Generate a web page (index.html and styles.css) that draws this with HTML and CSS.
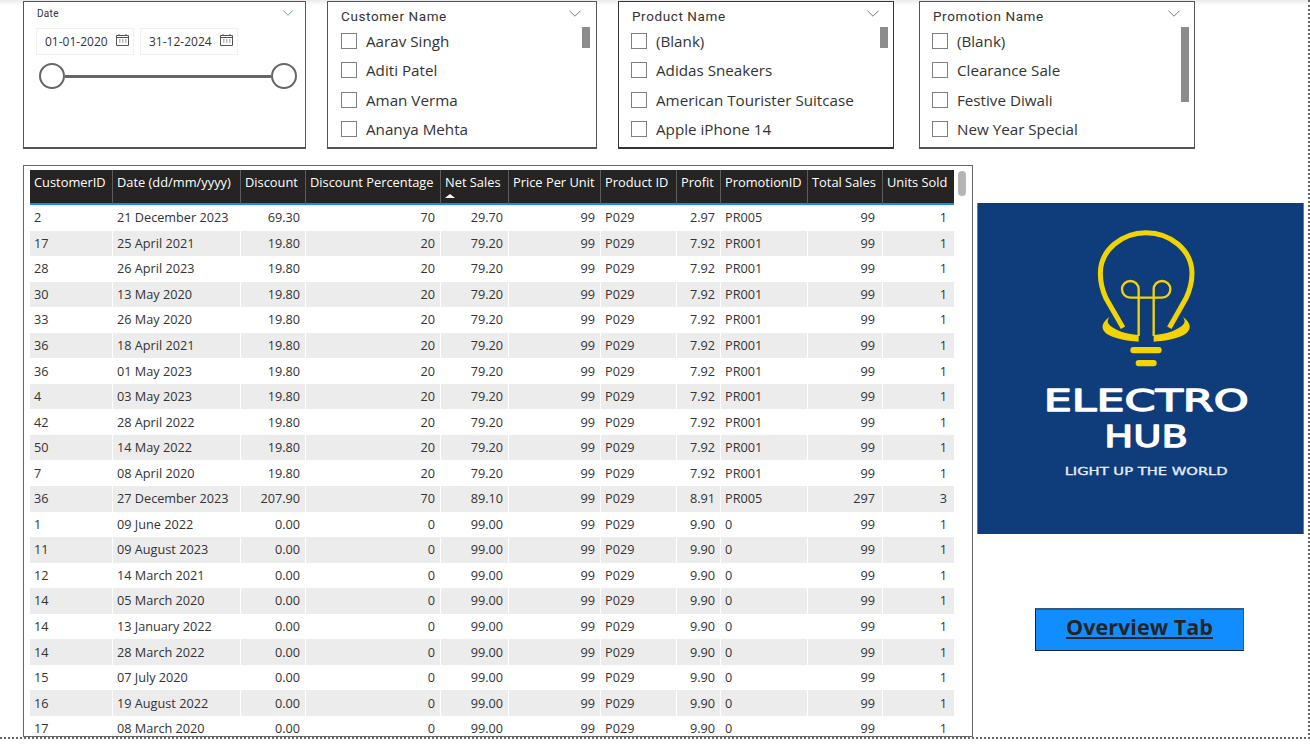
FILE: index.html
```html
<!DOCTYPE html>
<html lang="en">
<head>
  <meta charset="UTF-8" />
  <meta name="viewport" content="width=device-width, initial-scale=1.0" />
  <title>Electro Hub Sales Details</title>
  <link rel="stylesheet" href="styles.css">
</head>
<body>
  <div class="canvas">
    <div class="slicers">
      <section class="slicer date-slicer">
        <div class="slicer-head date-head">
          <span class="date-title">Date</span>
          <svg class="chevron green" viewBox="0 0 11 6"><path d="M.5.5l5 5 5-5" /></svg>
        </div>
        <div class="date-inputs">
          <div class="date-box">
            <span>01-01-2020</span>
            <svg class="cal" viewBox="0 0 13 12"><path class="cal-line" d="M.5 1.500h12v10H.5zM.5 3.500h12" /><path class="cal-top" d="M3 0v2M10 0v2" /><path class="cal-dots" d="M3 6h1.500M6 6h1.500M9 6h1.500M3 8h1.500M6 8h1.500M9 8h1.500" /></svg>
          </div>
          <div class="date-box">
            <span>31-12-2024</span>
            <svg class="cal" viewBox="0 0 13 12"><path class="cal-line" d="M.5 1.500h12v10H.5zM.5 3.500h12" /><path class="cal-top" d="M3 0v2M10 0v2" /><path class="cal-dots" d="M3 6h1.500M6 6h1.500M9 6h1.500M3 8h1.500M6 8h1.500M9 8h1.500" /></svg>
          </div>
        </div>
        <div class="range">
          <span class="handle"></span>
          <span class="track"></span>
          <span class="handle"></span>
        </div>
      </section>

      <section class="slicer customer-slicer">
        <div class="slicer-head">
          <span class="slicer-title">Customer Name</span>
          <svg class="chevron" viewBox="0 0 11 6"><path d="M.5.5l5 5 5-5" /></svg>
        </div>
        <div class="slicer-body">
          <ul class="slicer-list">
            <li><span class="check"></span>Aarav Singh</li>
            <li><span class="check"></span>Aditi Patel</li>
            <li><span class="check"></span>Aman Verma</li>
            <li><span class="check"></span>Ananya Mehta</li>
          </ul>
          <div class="thumb"></div>
        </div>
      </section>

      <section class="slicer product-slicer">
        <div class="slicer-head">
          <span class="slicer-title">Product Name</span>
          <svg class="chevron" viewBox="0 0 11 6"><path d="M.5.5l5 5 5-5" /></svg>
        </div>
        <div class="slicer-body">
          <ul class="slicer-list">
            <li><span class="check"></span>(Blank)</li>
            <li><span class="check"></span>Adidas Sneakers</li>
            <li><span class="check"></span>American Tourister Suitcase</li>
            <li><span class="check"></span>Apple iPhone 14</li>
          </ul>
          <div class="thumb"></div>
        </div>
      </section>

      <section class="slicer promo-slicer">
        <div class="slicer-head">
          <span class="slicer-title">Promotion Name</span>
          <svg class="chevron" viewBox="0 0 11 6"><path d="M.5.5l5 5 5-5" /></svg>
        </div>
        <div class="slicer-body">
          <ul class="slicer-list">
            <li><span class="check"></span>(Blank)</li>
            <li><span class="check"></span>Clearance Sale</li>
            <li><span class="check"></span>Festive Diwali</li>
            <li><span class="check"></span>New Year Special</li>
          </ul>
          <div class="thumb thumb-long"></div>
        </div>
      </section>
    </div>

    <div class="main">
      <section class="table-panel">
        <div class="table-wrap">
          <table class="sales">
            <colgroup>
              <col class="c82"><col class="c128"><col class="c65"><col class="c135"><col class="c68"><col class="c92"><col class="c76"><col class="c44"><col class="c87"><col class="c75"><col class="c72">
            </colgroup>
            <thead>
              <tr>
                <th>CustomerID</th><th>Date (dd/mm/yyyy)</th><th>Discount</th><th>Discount Percentage</th>
                <th>Net Sales<span class="sort-up"></span></th>
                <th>Price Per Unit</th><th>Product ID</th><th>Profit</th><th>PromotionID</th><th>Total Sales</th><th>Units Sold</th>
              </tr>
            </thead>
            <tbody>
              <tr><td>2</td><td>21 December 2023</td><td class="num">69.30</td><td class="num">70</td><td class="num">29.70</td><td class="num">99</td><td>P029</td><td class="num">2.97</td><td>PR005</td><td class="num">99</td><td class="num">1</td></tr>
              <tr><td>17</td><td>25 April 2021</td><td class="num">19.80</td><td class="num">20</td><td class="num">79.20</td><td class="num">99</td><td>P029</td><td class="num">7.92</td><td>PR001</td><td class="num">99</td><td class="num">1</td></tr>
              <tr><td>28</td><td>26 April 2023</td><td class="num">19.80</td><td class="num">20</td><td class="num">79.20</td><td class="num">99</td><td>P029</td><td class="num">7.92</td><td>PR001</td><td class="num">99</td><td class="num">1</td></tr>
              <tr><td>30</td><td>13 May 2020</td><td class="num">19.80</td><td class="num">20</td><td class="num">79.20</td><td class="num">99</td><td>P029</td><td class="num">7.92</td><td>PR001</td><td class="num">99</td><td class="num">1</td></tr>
              <tr><td>33</td><td>26 May 2020</td><td class="num">19.80</td><td class="num">20</td><td class="num">79.20</td><td class="num">99</td><td>P029</td><td class="num">7.92</td><td>PR001</td><td class="num">99</td><td class="num">1</td></tr>
              <tr><td>36</td><td>18 April 2021</td><td class="num">19.80</td><td class="num">20</td><td class="num">79.20</td><td class="num">99</td><td>P029</td><td class="num">7.92</td><td>PR001</td><td class="num">99</td><td class="num">1</td></tr>
              <tr><td>36</td><td>01 May 2023</td><td class="num">19.80</td><td class="num">20</td><td class="num">79.20</td><td class="num">99</td><td>P029</td><td class="num">7.92</td><td>PR001</td><td class="num">99</td><td class="num">1</td></tr>
              <tr><td>4</td><td>03 May 2023</td><td class="num">19.80</td><td class="num">20</td><td class="num">79.20</td><td class="num">99</td><td>P029</td><td class="num">7.92</td><td>PR001</td><td class="num">99</td><td class="num">1</td></tr>
              <tr><td>42</td><td>28 April 2022</td><td class="num">19.80</td><td class="num">20</td><td class="num">79.20</td><td class="num">99</td><td>P029</td><td class="num">7.92</td><td>PR001</td><td class="num">99</td><td class="num">1</td></tr>
              <tr><td>50</td><td>14 May 2022</td><td class="num">19.80</td><td class="num">20</td><td class="num">79.20</td><td class="num">99</td><td>P029</td><td class="num">7.92</td><td>PR001</td><td class="num">99</td><td class="num">1</td></tr>
              <tr><td>7</td><td>08 April 2020</td><td class="num">19.80</td><td class="num">20</td><td class="num">79.20</td><td class="num">99</td><td>P029</td><td class="num">7.92</td><td>PR001</td><td class="num">99</td><td class="num">1</td></tr>
              <tr><td>36</td><td>27 December 2023</td><td class="num">207.90</td><td class="num">70</td><td class="num">89.10</td><td class="num">99</td><td>P029</td><td class="num">8.91</td><td>PR005</td><td class="num">297</td><td class="num">3</td></tr>
              <tr><td>1</td><td>09 June 2022</td><td class="num">0.00</td><td class="num">0</td><td class="num">99.00</td><td class="num">99</td><td>P029</td><td class="num">9.90</td><td>0</td><td class="num">99</td><td class="num">1</td></tr>
              <tr><td>11</td><td>09 August 2023</td><td class="num">0.00</td><td class="num">0</td><td class="num">99.00</td><td class="num">99</td><td>P029</td><td class="num">9.90</td><td>0</td><td class="num">99</td><td class="num">1</td></tr>
              <tr><td>12</td><td>14 March 2021</td><td class="num">0.00</td><td class="num">0</td><td class="num">99.00</td><td class="num">99</td><td>P029</td><td class="num">9.90</td><td>0</td><td class="num">99</td><td class="num">1</td></tr>
              <tr><td>14</td><td>05 March 2020</td><td class="num">0.00</td><td class="num">0</td><td class="num">99.00</td><td class="num">99</td><td>P029</td><td class="num">9.90</td><td>0</td><td class="num">99</td><td class="num">1</td></tr>
              <tr><td>14</td><td>13 January 2022</td><td class="num">0.00</td><td class="num">0</td><td class="num">99.00</td><td class="num">99</td><td>P029</td><td class="num">9.90</td><td>0</td><td class="num">99</td><td class="num">1</td></tr>
              <tr><td>14</td><td>28 March 2022</td><td class="num">0.00</td><td class="num">0</td><td class="num">99.00</td><td class="num">99</td><td>P029</td><td class="num">9.90</td><td>0</td><td class="num">99</td><td class="num">1</td></tr>
              <tr><td>15</td><td>07 July 2020</td><td class="num">0.00</td><td class="num">0</td><td class="num">99.00</td><td class="num">99</td><td>P029</td><td class="num">9.90</td><td>0</td><td class="num">99</td><td class="num">1</td></tr>
              <tr><td>16</td><td>19 August 2022</td><td class="num">0.00</td><td class="num">0</td><td class="num">99.00</td><td class="num">99</td><td>P029</td><td class="num">9.90</td><td>0</td><td class="num">99</td><td class="num">1</td></tr>
              <tr><td>17</td><td>08 March 2020</td><td class="num">0.00</td><td class="num">0</td><td class="num">99.00</td><td class="num">99</td><td>P029</td><td class="num">9.90</td><td>0</td><td class="num">99</td><td class="num">1</td></tr>
            </tbody>
          </table>
        </div>
        <div class="table-thumb"></div>
      </section>

      <aside class="side">
        <svg class="logo" viewBox="6 9 979 993">
          <rect class="logo-bg" x="6" y="9" width="979" height="993" />
          <path class="bulb" d="M443 383L392 295C378 265 375 240 375 220C375 150 440 98 512 98C585 98 650 150 650 220C650 240 645 268 632 295L582 383" />
          <path class="collar" d="M403 350C375 370 375 390 400 405C425 418 460 423 490 425V405C450 402 415 390 400 372C395 365 397 357 403 350Z" />
          <path class="collar" d="M622 350C650 370 650 390 625 405C600 418 565 423 535 425V405C575 402 610 390 625 372C630 365 628 357 622 350Z" />
          <path class="filament" d="M490 408V268A25 25 0 1 0 465 293H560A25 25 0 1 0 535 268V408" />
          <rect class="collar" x="465" y="441" width="94" height="19" rx="9" />
          <rect class="collar" x="481" y="480" width="63" height="19" rx="9" />
          <text class="logo-name" x="205" y="632" textLength="615" lengthAdjust="spacingAndGlyphs">ELECTRO</text>
          <text class="logo-name" x="387" y="742" textLength="251" lengthAdjust="spacingAndGlyphs">HUB</text>
          <text class="logo-tag" x="268" y="824" textLength="489" lengthAdjust="spacingAndGlyphs">LIGHT UP THE WORLD</text>
        </svg>
        <a class="nav-btn" href="#">Overview Tab</a>
      </aside>
    </div>
  </div>
</body>
</html>
```

FILE: styles.css
```css
* {
  box-sizing: border-box;
}

html, body {
  margin: 0;
  height: 100%;
  background-color: white;
  overflow: hidden;
}

body {
  font-family: "Open Sans", "Noto Sans", sans-serif;
  color: #333;
}

.canvas {
  width: 1310px;
  height: 739px;
  padding: 1px 0 0 23px;
  border-right: 2px dotted #666;
  border-bottom: 2px dotted #666;
  box-shadow: inset 0 5px 4px -3px #e4e4e4;
}

/* slicers row */
.slicers {
  display: flex;
  height: 148px;
}

.slicer {
  display: flex;
  flex-direction: column;
  background-color: white;
  border: 1px solid #555;
  border-bottom-width: 2px;
}

.date-slicer { width: 283px; padding: 0 8px 0 13px; }
.customer-slicer { width: 270px; margin-left: 21px; padding: 0 6px 0 13px; }
.product-slicer { width: 276px; margin-left: 21px; padding: 0 5px 0 13px; border-color: #333; }
.promo-slicer { width: 276px; margin-left: 25px; padding: 0 5px 0 13px; }

.product-slicer .slicer-list,
.promo-slicer .slicer-list {
  margin-left: -1px;
}

.slicer-head {
  display: flex;
  justify-content: space-between;
  align-items: center;
  height: 24px;
  padding: 3px 9px 0 0;
}

.slicer-title {
  font-family: Roboto, "Noto Sans", sans-serif;
  font-size: 13.5px;
  letter-spacing: 0.6px;
  color: #333;
}

.chevron {
  width: 12px;
  height: 7px;
  margin-top: -5px;
  fill: none;
  stroke: #666;
  stroke-width: 0.8;
}

.chevron.green {
  width: 10px;
  height: 6px;
  margin-top: 0;
  stroke: #4f9a78;
  stroke-width: 1;
}

.slicer-body {
  display: flex;
  justify-content: space-between;
}

.slicer-list {
  list-style: none;
  margin: 0;
  padding: 0;
}

.slicer-list li {
  display: flex;
  align-items: center;
  height: 29.5px;
  font-size: 15.2px;
  white-space: nowrap;
}

.check {
  width: 16px;
  height: 16px;
  margin-right: 9px;
  background-color: white;
  border: 1px solid #808080;
}

.thumb {
  width: 8px;
  height: 21px;
  margin-top: 1px;
  background-color: #8c8c8c;
}

.thumb-long {
  height: 75px;
}

/* date slicer */
.date-head {
  height: 22px;
  padding: 0 4px 0 0;
}

.date-title {
  font-family: Roboto, "Noto Sans", sans-serif;
  font-size: 10px;
  letter-spacing: 0.3px;
}

.date-inputs {
  display: flex;
  gap: 6px;
  margin-top: 4px;
  margin-left: -1px;
}

.date-box {
  display: flex;
  align-items: center;
  justify-content: space-between;
  width: 98px;
  height: 27px;
  padding: 0 4px 0 8px;
  border: 1px solid #f1f1f1;
  font-size: 12px;
}

.cal {
  width: 13px;
  height: 12px;
  margin-top: -4px;
  fill: none;
  stroke-width: 1;
}

.cal-line { stroke: #555; }
.cal-top { stroke: #7a4a8c; }
.cal-dots { stroke: #777; }

.range {
  display: flex;
  align-items: center;
  margin: 8px 0 0 2px;
}

.handle {
  flex: none;
  width: 26px;
  height: 26px;
  background-color: white;
  border: 2px solid #666;
  border-radius: 50%;
}

.track {
  flex: 1;
  height: 3px;
  background-color: #666;
}

/* table and right column */
.main {
  display: flex;
  margin-top: 16px;
}

.table-panel {
  display: flex;
  flex: none;
  width: 950px;
  height: 572px;
  padding: 4px 0 0 6px;
  border: 1px solid #666;
}

.table-wrap {
  flex: none;
  width: 924px;
  overflow: hidden;
}

.sales {
  width: 924px;
  table-layout: fixed;
  border-collapse: separate;
  border-spacing: 0;
  font-size: 12.7px;
}

.c82 { width: 82px; }
.c128 { width: 128px; }
.c65 { width: 65px; }
.c135 { width: 135px; }
.c68 { width: 68px; }
.c92 { width: 92px; }
.c76 { width: 76px; }
.c44 { width: 44px; }
.c87 { width: 87px; }
.c75 { width: 75px; }
.c72 { width: 72px; }

.sales th {
  height: 35px;
  padding: 4px 0 0 4px;
  vertical-align: top;
  text-align: left;
  font-size: 12.85px;
  font-weight: 500;
  line-height: 17px;
  white-space: nowrap;
  color: white;
  background-color: #252423;
  border-left: 1px solid #5c5c5c;
  border-bottom: 2px solid #118dff;
}

.sales th:first-child {
  border-left: none;
}

.sort-up {
  display: block;
  width: 0;
  margin-top: 3px;
  border-left: 5px solid transparent;
  border-right: 5px solid transparent;
  border-bottom: 4px solid white;
}

.sales td {
  height: 25.55px;
  padding: 0 5px 0 4px;
  line-height: 17px;
  white-space: nowrap;
  border-left: 1px solid transparent;
}

.sales td:first-child {
  border-left: none;
}

.sales td.num {
  text-align: right;
}

.sales td:nth-child(n+10) {
  padding-right: 7px;
}

.sales tbody tr:nth-child(even) td {
  background-color: #ececec;
  background-clip: padding-box;
}

.table-thumb {
  flex: none;
  width: 8px;
  height: 25px;
  margin: 1px 0 0 4px;
  background-color: #b5b5b5;
  border-radius: 4px;
}

.side {
  display: flex;
  flex-direction: column;
  align-items: flex-start;
  padding: 38px 0 0 4px;
}

.logo {
  display: block;
  width: 327px;
  height: 331px;
}

.logo-bg { fill: #0f3d7c; }

.bulb {
  fill: none;
  stroke: #f2d500;
  stroke-width: 15;
}

.collar { fill: #f2d500; }

.filament {
  fill: none;
  stroke: #f2d500;
  stroke-width: 7;
}

.logo-name {
  font-family: "DejaVu Sans", sans-serif;
  font-size: 93px;
  fill: white;
  stroke: white;
  stroke-width: 4;
  stroke-linejoin: round;
}

.logo-tag {
  font-family: "DejaVu Sans", sans-serif;
  font-size: 33px;
  fill: #e4ecf6;
  stroke: #e4ecf6;
  stroke-width: 1;
}

.nav-btn {
  display: block;
  width: 209px;
  height: 43px;
  margin: 74px 0 0 58px;
  text-align: center;
  font-size: 21.6px;
  font-weight: 700;
  line-height: 33px;
  color: #252423;
  background-color: #118dff;
  border: 1px solid #0b2545;
  border-top: 2px solid #355a7c;
  border-right-color: #355a7c;
}
```
